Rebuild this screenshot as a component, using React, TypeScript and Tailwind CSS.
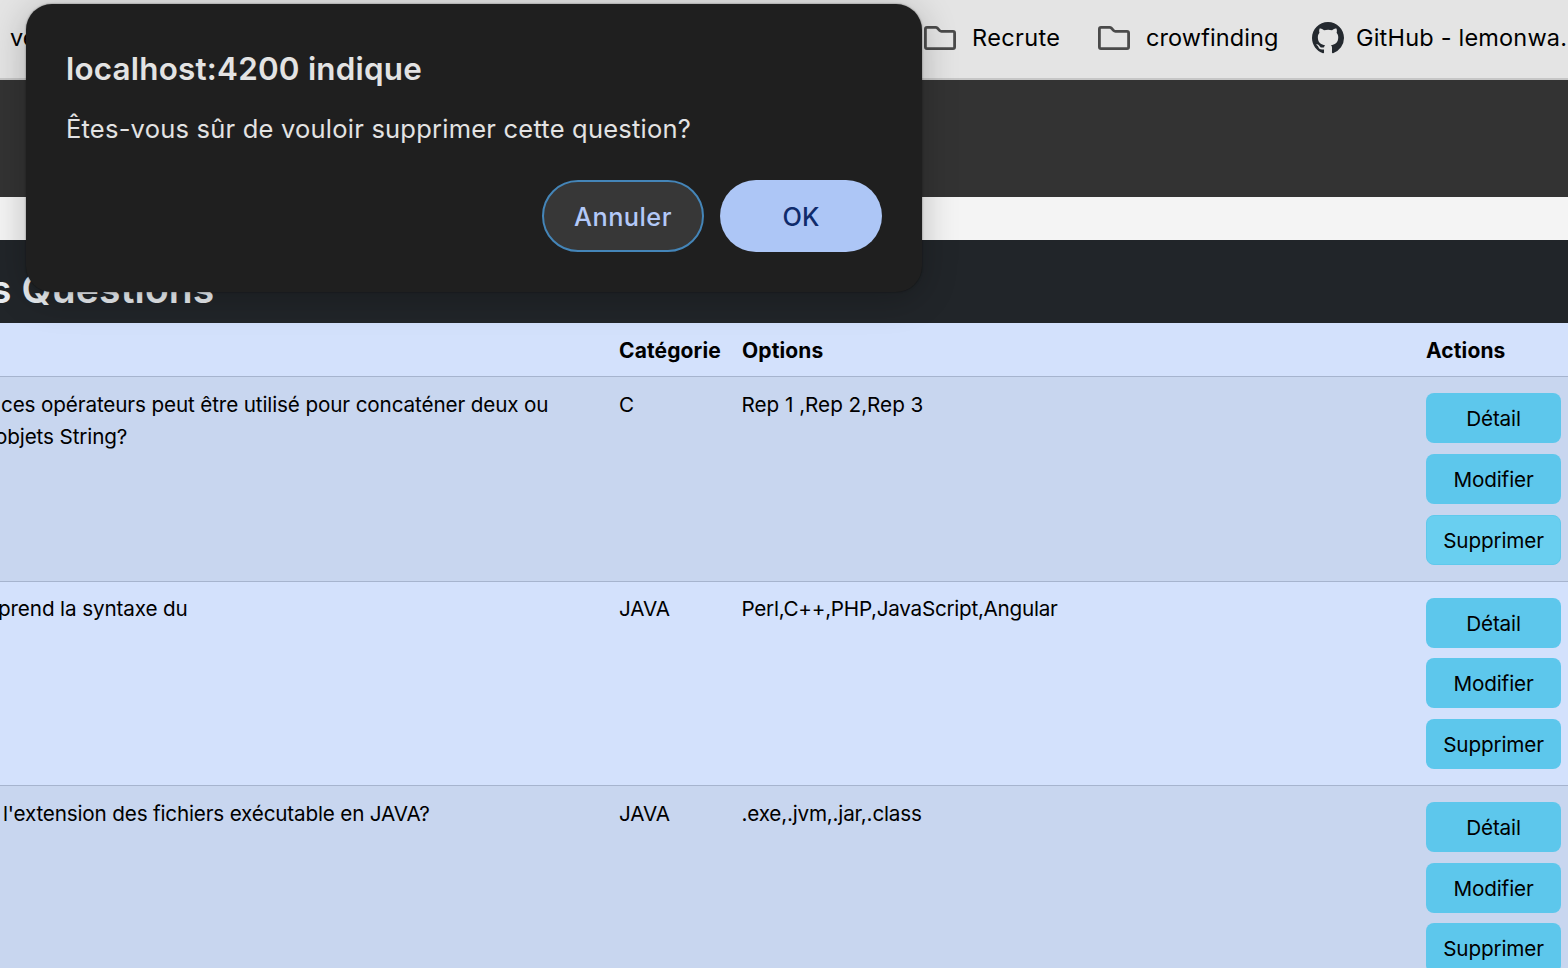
type Question = {
  lines: { text: string; className: string }[];
  category: string;
  options: string;
  className: string;
  textClassName: string;
  optionsClassName: string;
  actionsClassName: string;
  deleteHovered?: boolean;
};

const questions: Question[] = [
  {
    lines: [
      { text: "ces opérateurs peut être utilisé pour concaténer deux ou", className: "ml-px tracking-[-0.14px]" },
      { text: "objets String?", className: "-ml-[5px]" },
    ],
    category: "C",
    options: "Rep 1 ,Rep 2,Rep 3",
    className: "h-[205px] bg-[#c8d6ef]",
    textClassName: "pt-3",
    optionsClassName: "tracking-[-0.02px]",
    actionsClassName: "gap-[11px]",
    deleteHovered: true,
  },
  {
    lines: [{ text: "prend la syntaxe du", className: "-ml-[2px]" }],
    category: "JAVA",
    options: "Perl,C++,PHP,JavaScript,Angular",
    className: "h-[204px] bg-[#d3e1fc]",
    textClassName: "pt-[11px]",
    optionsClassName: "tracking-[-0.27px]",
    actionsClassName: "gap-[10.4px]",
  },
  {
    lines: [{ text: "l'extension des fichiers exécutable en JAVA?", className: "ml-[3px] tracking-[-0.18px]" }],
    category: "JAVA",
    options: ".exe,.jvm,.jar,.class",
    className: "h-[205px] bg-[#c8d6ef]",
    textClassName: "pt-3",
    optionsClassName: "tracking-[-0.2px]",
    actionsClassName: "gap-[10.6px]",
  },
];

function FolderIcon() {
  return (
    <svg width="32" height="24" viewBox="0 0 32 24" fill="none" className="block shrink-0">
      <path
        d="M3 1.4H11.6Q12.6 1.4 13.3 2.1L15.7 4.6Q16.4 5.3 17.4 5.3H29Q30.6 5.3 30.6 6.9V21Q30.6 22.6 29 22.6H3Q1.4 22.6 1.4 21V3Q1.4 1.4 3 1.4Z"
        stroke="#4a4a4a"
        strokeWidth="2.8"
      />
    </svg>
  );
}

function GithubMark() {
  return (
    <svg width="32" height="32" viewBox="0 0 16 16" fill="#24292f" className="block shrink-0">
      <path d="M8 0C3.58 0 0 3.58 0 8c0 3.54 2.29 6.53 5.47 7.59.4.07.55-.17.55-.38 0-.19-.01-.82-.01-1.49-2.01.37-2.53-.49-2.69-.94-.09-.23-.48-.94-.82-1.13-.28-.15-.68-.52-.01-.53.63-.01 1.08.58 1.23.82.72 1.21 1.87.87 2.33.66.07-.52.28-.87.51-1.07-1.78-.2-3.64-.89-3.64-3.95 0-.87.31-1.59.82-2.15-.08-.2-.36-1.02.08-2.12 0 0 .67-.21 2.2.82.64-.18 1.32-.27 2-.27s1.36.09 2 .27c1.53-1.04 2.2-.82 2.2-.82.44 1.1.16 1.92.08 2.12.51.56.82 1.27.82 2.15 0 3.07-1.87 3.75-3.65 3.95.29.25.54.73.54 1.48 0 1.07-.01 1.93-.01 2.2 0 .21.15.46.55.38A8.01 8.01 0 0 0 16 8c0-4.42-3.58-8-8-8Z" />
    </svg>
  );
}

function BookmarksBar() {
  return (
    <div className="flex h-20 items-start border-b-2 border-[#c6c6c6] bg-[#e4e4e4] pt-[22px] text-[23.5px] leading-8 text-black">
      <div className="w-[924px] shrink-0 pl-[10px]">veille</div>
      <div className="flex w-[174px] shrink-0 items-center gap-4">
        <FolderIcon />
        <span className="tracking-[0.35px]">Recrute</span>
      </div>
      <div className="flex w-[214px] shrink-0 items-center gap-4">
        <FolderIcon />
        <span className="tracking-[0.1px]">crowfinding</span>
      </div>
      <div className="flex shrink-0 items-center gap-3">
        <GithubMark />
        <span className="tracking-[0.2px]">GitHub - lemonwa.</span>
      </div>
    </div>
  );
}

function ActionButton({ label, hovered = false }: { label: string; hovered?: boolean }) {
  return (
    <button
      className={`h-[50px] w-[135px] shrink-0 rounded-[8px] pt-0.5 text-center tracking-[-0.15px] ${
        hovered ? "border border-[#5fc9ec] bg-[#69cff0]" : "bg-[#5dc7ec]"
      }`}
    >
      {label}
    </button>
  );
}

function QuestionsTable() {
  return (
    <div className="text-[20.7px] leading-8 tracking-[-0.13px] text-black">
      <div className="grid h-[54px] grid-cols-[619px_123px_684px_1fr] border-b border-[#a6b4ce] bg-[#d3e1fc] pt-3 text-[21px] font-bold tracking-[0.12px]">
        <span />
        <span>Catégorie</span>
        <span>Options</span>
        <span>Actions</span>
      </div>
      {questions.map((q) => (
        <div
          key={q.options}
          className={`grid grid-cols-[619px_122.5px_684.5px_1fr] border-b border-[#a6b4ce] ${q.className}`}
        >
          <div className={`whitespace-nowrap ${q.textClassName}`}>
            {q.lines.map((line) => (
              <div key={line.text} className={line.className}>
                {line.text}
              </div>
            ))}
          </div>
          <div className={q.textClassName}>{q.category}</div>
          <div className={`${q.textClassName} ${q.optionsClassName}`}>{q.options}</div>
          <div className={`flex flex-col pt-4 ${q.actionsClassName}`}>
            <ActionButton label="Détail" />
            <ActionButton label="Modifier" />
            <ActionButton label="Supprimer" hovered={q.deleteHovered} />
          </div>
        </div>
      ))}
    </div>
  );
}

function ConfirmDialog() {
  return (
    <div className="absolute top-1 left-[26px] flex h-72 w-[896px] flex-col rounded-[26px] bg-[#1f1f1f] px-10 pt-[45px] text-[#e3e3e3] shadow-[0_0_2px_rgba(0,0,0,0.5),0_6px_36px_rgba(0,0,0,0.24)]">
      <h2 className="text-[31.4px] leading-10 font-semibold tracking-[0.22px]">localhost:4200 indique</h2>
      <p className="mt-5 text-[25.5px] leading-10 tracking-[0.22px]">
        Êtes-vous sûr de vouloir supprimer cette question?
      </p>
      <div className="mt-[31px] flex justify-end gap-4 text-[25.3px] font-medium">
        <button className="h-[72px] w-[162px] rounded-full border-2 border-[#4485b8] bg-[#373737] pt-px tracking-[0.45px] text-[#b3c9f8]">
          Annuler
        </button>
        <button className="h-[72px] w-[162px] rounded-full bg-[#adc6f6] pt-px tracking-[0.2px] text-[#0f2b6b]">OK</button>
      </div>
    </div>
  );
}

export default function App() {
  return (
    <div className="relative h-[968px] w-[1568px] overflow-hidden bg-[#f4f4f4] font-['Inter','Liberation_Sans',sans-serif]">
      <BookmarksBar />
      <div className="h-[117px] bg-[#333333]" />
      <div className="h-[43px] bg-[#f4f4f4]" />
      <div className="flex h-[83px] items-start bg-[#212529] pt-[25px]">
        <h1 className="-ml-[10px] text-[39px] leading-[48px] font-semibold tracking-[0.15px] text-[#e9edf1]">s Questions</h1>
      </div>
      <QuestionsTable />
      <ConfirmDialog />
    </div>
  );
}
